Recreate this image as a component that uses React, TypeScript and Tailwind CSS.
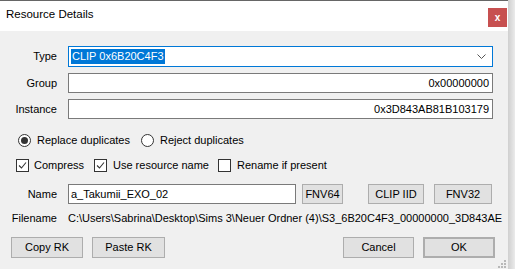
import { ReactNode } from 'react';

const font = { fontFamily: '"Liberation Sans", Arial, sans-serif' };

function Radio({ checked }: { checked?: boolean }) {
  return (
    <span className="flex h-[13px] w-[13px] shrink-0 items-center justify-center rounded-full border border-[#333] bg-white">
      {checked && <span className="h-[7px] w-[7px] rounded-full bg-[#333]" />}
    </span>
  );
}

function Check({ checked }: { checked?: boolean }) {
  return (
    <span className="flex h-[13px] w-[13px] shrink-0 items-center justify-center border border-[#333] bg-white">
      {checked && (
        <svg width="9" height="9" viewBox="0 0 9 9">
          <polyline points="1,4.5 3.5,7 8,1.5" fill="none" stroke="#333" strokeWidth="1.1" />
        </svg>
      )}
    </span>
  );
}

function Button({ children, className = '' }: { children: ReactNode; className?: string }) {
  return (
    <div
      className={`flex items-center justify-center border border-[#adadad] bg-[#e1e1e1] text-[11px] text-black ${className}`}
    >
      {children}
    </div>
  );
}

function Label({ children }: { children: ReactNode }) {
  return <div className="w-[57px] shrink-0 text-right">{children}</div>;
}

export default function App() {
  return (
    <div className="flex h-[269px] w-[515px] overflow-hidden bg-[#e6e6e6]" style={font}>
      <div className="flex w-[508px] flex-col">
        <div className="h-px bg-[#666]" />
        <div className="flex h-[30px] items-start bg-white">
          <div className="mt-[5px] pl-[6px] text-[11.5px] text-black">Resource Details</div>
          <div className="ml-auto mr-px mt-[7px] flex h-[19px] w-[19px] items-center justify-center bg-[#c75050] text-[10px] font-bold leading-none text-white">
            x
          </div>
        </div>

        <div className="relative flex-1 bg-[#f0f0f0] text-[11px] leading-[13px] text-black">
          {/* Type */}
          <div className="mt-[15px] flex items-center">
            <Label>Type</Label>
            <div className="ml-[11px] flex h-[21px] w-[425px] items-center border border-[#0078d7] bg-white pl-[2px] pr-[6px]">
              <span className="bg-[#0078d7] px-px py-px text-white">CLIP 0x6B20C4F3</span>
              <svg className="ml-auto" width="9" height="5" viewBox="0 0 9 5">
                <polyline points="0.5,0.5 4.5,4.5 8.5,0.5" fill="none" stroke="#555" strokeWidth="1" />
              </svg>
            </div>
          </div>

          {/* Group */}
          <div className="mt-[6px] flex items-center">
            <Label>Group</Label>
            <div className="ml-[11px] flex h-[20px] w-[425px] items-center justify-end border border-[#7a7a7a] bg-white pr-[3px]">
              0x00000000
            </div>
          </div>

          {/* Instance */}
          <div className="mt-[6px] flex items-center">
            <Label>Instance</Label>
            <div className="ml-[11px] flex h-[20px] w-[425px] items-center justify-end border border-[#7a7a7a] bg-white pr-[3px]">
              0x3D843AB81B103179
            </div>
          </div>

          {/* Radios */}
          <div className="mt-[15px] flex h-[13px] items-center pl-[18px]">
            <div className="flex w-[123px] items-center gap-[6px]">
              <Radio checked />
              <span>Replace duplicates</span>
            </div>
            <div className="flex items-center gap-[6px]">
              <Radio />
              <span>Reject duplicates</span>
            </div>
          </div>

          {/* Checkboxes */}
          <div className="mt-[12px] flex h-[13px] items-center pl-[16px]">
            <div className="flex w-[78px] items-center gap-[5px]">
              <Check checked />
              <span>Compress</span>
            </div>
            <div className="flex w-[124px] items-center gap-[6px]">
              <Check checked />
              <span>Use resource name</span>
            </div>
            <div className="flex items-center gap-[6px]">
              <Check />
              <span>Rename if present</span>
            </div>
          </div>

          {/* Name */}
          <div className="mt-[12px] flex items-center">
            <Label>Name</Label>
            <div className="ml-[11px] flex h-[20px] w-[228px] items-center border border-[#7a7a7a] bg-white pl-[2px]">
              a_Takumii_EXO_02
            </div>
            <Button className="ml-[6px] h-[20px] w-[41px]">FNV64</Button>
            <Button className="ml-[25px] h-[20px] w-[56px]">CLIP IID</Button>
            <Button className="ml-[10px] h-[20px] w-[58px]">FNV32</Button>
          </div>

          {/* Filename */}
          <div className="mt-[8px] flex items-center">
            <Label>Filename</Label>
            <div className="ml-[11px] whitespace-nowrap">
              C:\Users\Sabrina\Desktop\Sims 3\Neuer Ordner (4)\S3_6B20C4F3_00000000_3D843AE
            </div>
          </div>

          {/* Bottom buttons */}
          <div className="mt-[12px] flex items-center">
            <Button className="ml-[11px] h-[21px] w-[72px]">Copy RK</Button>
            <Button className="ml-[9px] h-[21px] w-[73px]">Paste RK</Button>
            <Button className="ml-auto h-[21px] w-[71px]">Cancel</Button>
            <Button className="ml-[9px] mr-[13px] h-[21px] w-[72px] border-2 border-[#0078d7]">OK</Button>
          </div>

          {/* size grip */}
          <svg className="absolute bottom-0 right-[1px]" width="9" height="9" viewBox="0 0 9 9">
            <rect x="6" y="0" width="2" height="2" fill="#b8b8b8" />
            <rect x="3" y="3" width="2" height="2" fill="#b8b8b8" />
            <rect x="6" y="3" width="2" height="2" fill="#b8b8b8" />
            <rect x="0" y="6" width="2" height="2" fill="#b8b8b8" />
            <rect x="3" y="6" width="2" height="2" fill="#b8b8b8" />
            <rect x="6" y="6" width="2" height="2" fill="#b8b8b8" />
          </svg>
        </div>
      </div>
      <div className="w-[7px] bg-linear-to-r from-[#cfcfcf] to-[#ebebeb]" />
    </div>
  );
}
